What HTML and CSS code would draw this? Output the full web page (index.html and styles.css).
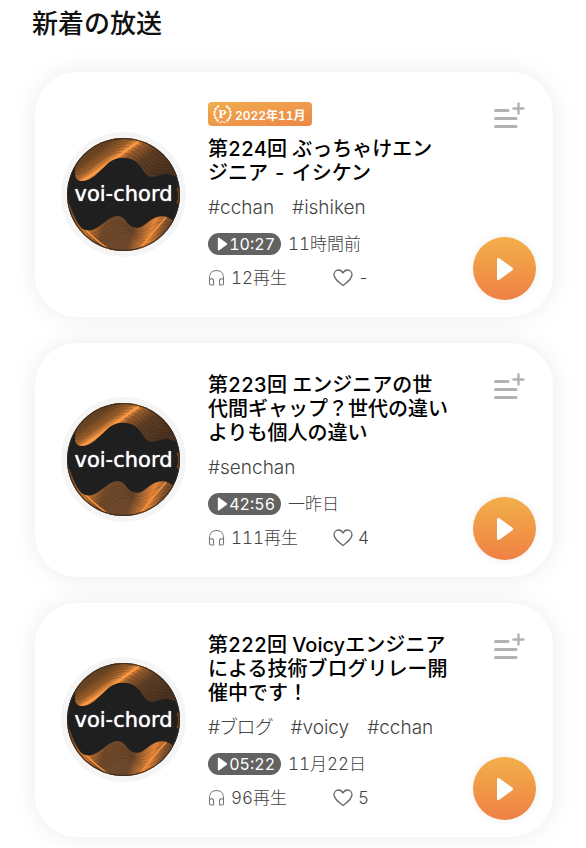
FILE: index.html
```html
<!DOCTYPE html>
<html lang="ja">
<head>
<meta charset="utf-8">
<meta name="viewport" content="width=device-width, initial-scale=1">
<title>新着の放送</title>
<link rel="stylesheet" href="styles.css">
</head>
<body>
<svg class="defs" aria-hidden="true">
  <defs>
    <linearGradient id="glow-top" gradientUnits="userSpaceOnUse" x1="24" y1="-11" x2="72" y2="55">
      <stop offset="0" stop-color="#5c3d22"/><stop offset=".3" stop-color="#704824"/><stop offset=".42" stop-color="#a8652c"/>
      <stop offset=".49" stop-color="#f79642"/><stop offset=".55" stop-color="#9a5c2a"/><stop offset=".7" stop-color="#5e3e24"/><stop offset="1" stop-color="#4a3220"/>
    </linearGradient>
    <linearGradient id="glow-bottom" gradientUnits="userSpaceOnUse" x1="2" y1="74" x2="104" y2="112">
      <stop offset="0" stop-color="#7a4a25"/><stop offset=".22" stop-color="#c9752f"/><stop offset=".36" stop-color="#70492a"/>
      <stop offset=".62" stop-color="#6b462a"/><stop offset=".78" stop-color="#e58538"/><stop offset=".88" stop-color="#81512a"/><stop offset="1" stop-color="#5a3c24"/>
    </linearGradient>
    <clipPath id="disc"><circle cx="57" cy="57" r="57"/></clipPath>
    <clipPath id="top-area"><path d="M9 14L8 38C10 45 19 45 28 38C38 30 43 20 55 20C65 20 70 23 75 30C79 36 81 40 88 39C98 36 101 34 114 41V-4H9Z"/></clipPath>
    <clipPath id="bottom-area"><path d="M0 63C5 72 8 84 15 91C24 97 31 90 38 85C45 79 52 76 58 82C63 89 68 93 76 89C84 84 88 78 98 79C104 80 107 84 110 86L114 118H-4V63Z"/></clipPath>
  </defs>
  <symbol id="cover" viewBox="0 0 114 114">
    <g clip-path="url(#disc)">
      <rect width="114" height="114" fill="#1f1f20"/>
      <g clip-path="url(#top-area)">
        <rect width="114" height="50" fill="url(#glow-top)"/>
        <g fill="none" stroke="#201811" stroke-opacity=".35" stroke-width=".6">
          <path d="M8 36C18 40 32 20 45 16S70 18 77 29S95 34 114 36"/>
          <path d="M8 33C18 37 32 17 47 13S72 15 79 26S97 31 114 33"/>
          <path d="M8 30C18 34 32 14 49 10S74 12 81 23S99 28 114 30"/>
          <path d="M8 27C18 31 32 11 51 7S76 9 83 20S101 25 114 27"/>
          <path d="M8 24C18 28 32 8 53 4S78 6 85 17S103 22 114 24"/>
          <path d="M8 21C18 25 32 5 55 1S80 3 87 14S105 19 114 21"/>
          <path d="M10 18C20 20 34 3 57 -2S82 0 89 11S107 16 114 18"/>
          <path d="M10 14C20 16 34 0 59 -5S84 -3 91 8S109 13 114 15"/>
        </g>
        <path d="M12 44C32 36 50 18 76 1" fill="none" stroke="#ff9d45" stroke-width="1.6"/>
      </g>
      <g clip-path="url(#bottom-area)">
        <rect y="60" width="114" height="54" fill="url(#glow-bottom)"/>
        <g fill="none" stroke="#2a1b10" stroke-opacity=".25" stroke-width=".6">
          <path d="M0 67C8 82 12 100 26 96S48 78 58 86S72 98 82 91S101 80 114 92"/>
          <path d="M0 71C8 86 12 104 28 99S50 81 60 89S74 101 84 94S101 83 114 95"/>
          <path d="M0 75C8 90 14 108 30 102S52 84 62 92S76 104 86 97S101 86 114 98"/>
          <path d="M0 79C8 94 16 112 32 105S54 87 64 95S78 107 88 100S103 89 114 101"/>
          <path d="M4 90C12 104 22 114 36 107S56 91 66 99S80 110 90 103S103 93 114 104"/>
        </g>
        <path d="M0 63C12 84 18 96 42 112M72 114C80 103 88 93 100 80" fill="none" stroke="#f79440" stroke-width="1.5"/>
      </g>
      <path d="M112 50Q115 57 112 66" stroke="#7d4a22" stroke-width="3" fill="none"/>
    </g>
    <circle cx="57" cy="57" r="56.5" fill="none" stroke="#38291c"/>
  </symbol>
  <symbol id="add-list" viewBox="0 0 32 28">
    <path d="M2.500 8.500H15M2.500 16.500H23M2.500 24.500H23" stroke="#b2b2b2" stroke-width="3" stroke-linecap="round"/>
    <path d="M25.500 1.500V11.500M20.500 6.500H30.500" stroke="#b2b2b2" stroke-width="2.400" stroke-linecap="round"/>
  </symbol>
  <symbol id="play" viewBox="0 0 18 24">
    <path d="M2.500 2.500V21.500L15.500 12Z" fill="#fff" stroke="#fff" stroke-width="3" stroke-linejoin="round"/>
  </symbol>
  <symbol id="headphones" viewBox="0 0 17 18">
    <path d="M1.500 15V8.500C1.500 4 4.500 1.500 8.500 1.500S15.500 4 15.500 8.500V15M1.500 10.500C3.500 9 5.500 10 5.500 11.500V16H3C2 16 1.500 15.500 1.500 14.500M15.500 10.500C13.500 9 11.500 10 11.500 11.500V16H14C15 16 15.500 15.500 15.500 14.500" fill="none" stroke="#777" stroke-width="1.100"/>
  </symbol>
  <symbol id="heart" viewBox="0 0 20 18">
    <path d="M10 16.500C5 12.500 1 9.500 1 5.700C1 3 3 1 5.500 1C7.500 1 9 2 10 4C11 2 12.500 1 14.500 1C17 1 19 3 19 5.700C19 9.500 15 12.500 10 16.500Z" fill="none" stroke="#666" stroke-width="1.300" stroke-linejoin="round"/>
  </symbol>
  <symbol id="laurel" viewBox="0 0 20 21">
    <g fill="none" stroke="#fff" stroke-linecap="round">
      <path d="M5.500 2.500C0 6 0 14.500 6.500 18.500M14.500 2.500C20 6 20 14.500 13.500 18.500" stroke-width="2.200" stroke-dasharray=".8 2.500"/>
      <path d="M7 19.500L10 18.500L13 19.500" stroke-width="1"/>
    </g>
  </symbol>
</svg>

<main class="page">
  <h1 class="heading">新着の放送</h1>
  <div class="list">
    <article class="card">
      <div class="avatar"><svg><use href="#cover"/></svg><span class="cover-text">voi-chord</span></div>
      <div class="content">
        <div class="badge"><span class="badge-icon"><svg><use href="#laurel"/></svg><span>P</span></span>2022年11月</div>
        <h2 class="title">第224回 ぶっちゃけエン<br>ジニア - イシケン</h2>
        <div class="tags"><a href="#cchan">#cchan</a><a href="#ishiken">#ishiken</a></div>
        <div class="meta"><span class="duration"><svg><use href="#play"/></svg>10:27</span><time>11時間前</time></div>
        <div class="stats"><span class="plays"><svg><use href="#headphones"/></svg>12再生</span><span class="likes"><svg><use href="#heart"/></svg>-</span></div>
      </div>
      <div class="actions">
        <button class="add" type="button" aria-label="リストに追加"><svg><use href="#add-list"/></svg></button>
        <button class="play" type="button" aria-label="再生"><svg><use href="#play"/></svg></button>
      </div>
    </article>

    <article class="card">
      <div class="avatar"><svg><use href="#cover"/></svg><span class="cover-text">voi-chord</span></div>
      <div class="content">
        <h2 class="title">第223回 エンジニアの世<br>代間ギャップ？世代の違い<br>よりも個人の違い</h2>
        <div class="tags"><a href="#senchan">#senchan</a></div>
        <div class="meta"><span class="duration"><svg><use href="#play"/></svg>42:56</span><time>一昨日</time></div>
        <div class="stats"><span class="plays"><svg><use href="#headphones"/></svg>111再生</span><span class="likes"><svg><use href="#heart"/></svg>4</span></div>
      </div>
      <div class="actions">
        <button class="add" type="button" aria-label="リストに追加"><svg><use href="#add-list"/></svg></button>
        <button class="play" type="button" aria-label="再生"><svg><use href="#play"/></svg></button>
      </div>
    </article>

    <article class="card">
      <div class="avatar"><svg><use href="#cover"/></svg><span class="cover-text">voi-chord</span></div>
      <div class="content">
        <h2 class="title">第222回 Voicyエンジニア<br>による技術ブログリレー開<br>催中です！</h2>
        <div class="tags"><a href="#blog">#ブログ</a><a href="#voicy">#voicy</a><a href="#cchan">#cchan</a></div>
        <div class="meta"><span class="duration"><svg><use href="#play"/></svg>05:22</span><time>11月22日</time></div>
        <div class="stats"><span class="plays"><svg><use href="#headphones"/></svg>96再生</span><span class="likes"><svg><use href="#heart"/></svg>5</span></div>
      </div>
      <div class="actions">
        <button class="add" type="button" aria-label="リストに追加"><svg><use href="#add-list"/></svg></button>
        <button class="play" type="button" aria-label="再生"><svg><use href="#play"/></svg></button>
      </div>
    </article>
  </div>
</main>
</body>
</html>
```
FILE: styles.css
```css
* { box-sizing: border-box; }
body {
  margin: 0;
  background: #fff;
  color: #111;
  font-family: Inter, "Noto Sans CJK JP", sans-serif;
  font-variant-numeric: tabular-nums;
}
svg { display: block; flex: none; }
.defs { position: absolute; width: 0; height: 0; }
.page { padding: 6px 33px 10px 35px; }
.heading {
  margin: 0 -3px 30px;
  font-size: 26px;
  line-height: 36px;
  font-weight: 500;
}
.list { display: flex; flex-direction: column; gap: 26px; }
.card {
  display: flex;
  padding: 30px 17px 27px 26px;
  border-radius: 42px;
  background: #fff;
  box-shadow: 0 0 26px rgba(0, 0, 0, .08);
}
.avatar {
  display: grid;
  flex: none;
  place-items: center;
  align-self: center;
  margin: 0 22px 4px 0;
  padding: 6px;
  border-radius: 50%;
  background: #f5f5f5;
}
.avatar > * { grid-area: 1 / 1; }
.avatar svg { width: 113px; height: 113px; }
.cover-text {
  z-index: 1;
  color: #fff;
  font: 21px/24px "DejaVu Sans", sans-serif;
  text-shadow: 0 0 1px #fff;
}
.content { flex: 1; min-width: 0; white-space: nowrap; }
.badge {
  display: flex;
  align-items: center;
  gap: 3px;
  width: max-content;
  height: 24px;
  margin-bottom: 11px;
  padding: 0 6px 0 5px;
  border-radius: 4px;
  background: linear-gradient(170deg, #f0ac4f, #ed8747);
  color: #fff;
  font-size: 12px;
  font-weight: 600;
}
.badge-icon { display: grid; place-items: center; font: bold 13px/16px "Liberation Serif", serif; }
.badge-icon > * { grid-area: 1 / 1; }
.badge-icon svg { width: 19px; height: 20px; }
.title { margin: 0; font-size: 20px; line-height: 24px; font-weight: 500; color: #000; }
.tags {
  display: flex;
  gap: 18px;
  margin-top: 11px;
  font-size: 19px;
  line-height: 24px;
  font-weight: 300;
  font-feature-settings: "palt";
}
.tags a { color: #444; text-decoration: none; }
.meta, .stats { display: flex; align-items: center; height: 24px; color: #444; font-size: 17px; line-height: 24px; font-weight: 300; }
.meta { gap: 7px; margin-top: 12px; }
.stats { margin-top: 10px; }
.duration {
  display: flex;
  align-items: center;
  justify-content: space-between;
  width: 73px;
  height: 22px;
  padding: 0 6px 0 9px;
  border-radius: 11px;
  background: #626262;
  color: #fff;
  font-size: 16px;
  font-weight: 400;
}
.duration svg { width: 11px; height: 14px; }
.plays, .likes { display: flex; align-items: center; }
.plays { width: 125px; gap: 6px; }
.plays svg { width: 17px; height: 18px; }
.likes { gap: 5px; }
.likes svg { width: 20px; height: 18px; }
.actions {
  display: flex;
  flex: none;
  flex-direction: column;
  align-items: center;
  justify-content: space-between;
  margin-bottom: -10px;
}
button { padding: 0; border: 0; background: none; cursor: pointer; }
.add { padding-left: 8px; }
.add svg { width: 32px; height: 28px; }
.play {
  display: grid;
  place-items: center;
  width: 63px;
  height: 63px;
  border-radius: 50%;
  background: linear-gradient(#f2af4a, #ef8144);
  box-shadow: 0 0 8px rgba(0, 0, 0, .08);
}
.play svg { width: 18px; height: 24px; }
```
